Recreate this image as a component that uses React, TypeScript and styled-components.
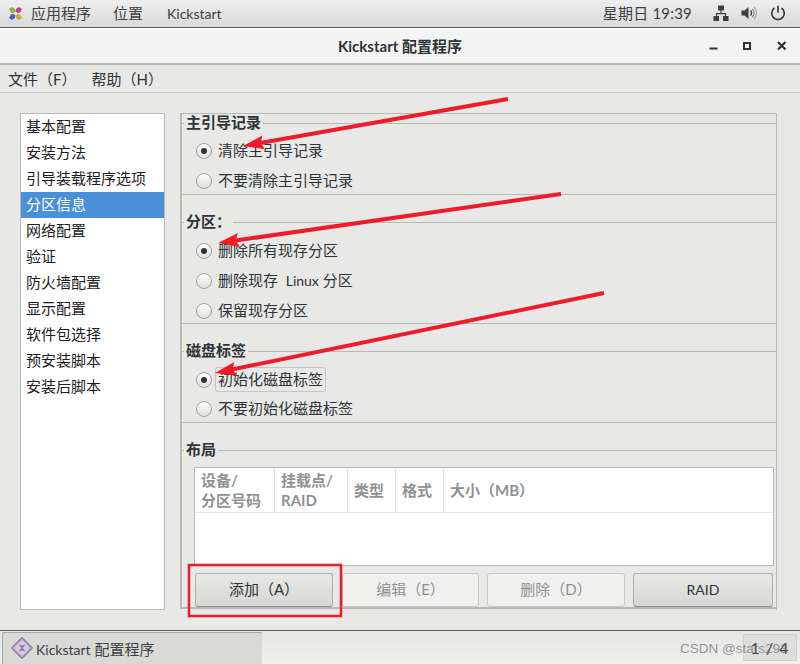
import React from "react";
import styled, { createGlobalStyle } from "styled-components";

const CJK = `Lato, "Noto Sans CJK SC", sans-serif`;

const Global = createGlobalStyle`
  html, body { margin: 0; padding: 0; background: #e8e8e7; }
  body { font-family: ${CJK}; font-size: 15px; color: #2e3436; }
  * { box-sizing: border-box; }
`;

const Screen = styled.div`
  position: relative;
  width: 800px;
  height: 664px;
  overflow: hidden;
  display: flex;
  flex-direction: column;
  background: #e8e8e7;
`;

const Latin = styled.span`
  font-size: 14px;
`;

const TopBar = styled.header`
  height: 28px;
  flex: none;
  display: flex;
  align-items: center;
  padding: 0 14px 1px 8px;
  color: #3c3f41;
  background: linear-gradient(#eeeeee, #d9d9d9);
  border-bottom: 1px solid #5d5d5c;
`;

const TopItem = styled.span<{ $gap: number }>`
  margin-left: ${(p) => p.$gap}px;
  margin-bottom: 1px;
  white-space: nowrap;
`;

const Spacer = styled.div`
  flex: 1;
`;

const Clock = styled.span`
  color: #3c3f41;
  margin: 0 21px 1px 0;
  letter-spacing: 0.2px;
  white-space: nowrap;
`;

const TrayIcon = styled.svg<{ $gap?: number }>`
  display: block;
  flex: none;
  margin-right: ${(p) => p.$gap ?? 0}px;
`;

const TitleBar = styled.div`
  height: 37px;
  flex: none;
  display: grid;
  grid-template-columns: 1fr auto 1fr;
  align-items: center;
  background: linear-gradient(#fafafa 0, #f4f4f4 10%, #f2f2f2 100%);
  border-bottom: 2px solid #b9b9b7;
`;

const TitleText = styled.div`
  grid-column: 2;
  font-weight: 700;
  color: #2e3436;
`;

const WinButtons = styled.div`
  grid-column: 3;
  justify-self: end;
  margin-right: 13px;
  display: flex;
  align-items: center;
  gap: 25px;
`;

const MenuBar = styled.nav`
  height: 28px;
  flex: none;
  display: flex;
  align-items: center;
  gap: 15px;
  padding: 0 0 0 8px;
  background: #e8e8e7;
  border-bottom: 1px solid #cfcfcd;
`;

const MenuItem = styled.span`
  color: #2e3436;
  white-space: nowrap;
`;

const Main = styled.main`
  flex: 1;
  display: flex;
  align-items: flex-start;
  padding: 20px 23px 0 20px;
  gap: 15px;
`;

const SideList = styled.ul`
  list-style: none;
  margin: 0;
  padding: 0;
  width: 145px;
  height: 497px;
  flex: none;
  background: #fff;
  border: 1px solid #b9b9b7;
`;

const SideRow = styled.li<{ $active?: boolean }>`
  height: 26px;
  line-height: 24px;
  padding-left: 5px;
  color: ${(p) => (p.$active ? "#fff" : "#1d1d1d")};
  background: ${(p) => (p.$active ? "#4a90d9" : "transparent")};
  white-space: nowrap;
`;

const Panel = styled.div`
  flex: 1;
  display: flex;
  flex-direction: column;
  border-top: 1px solid #b9b9b7;
  border-right: 1px solid #b9b9b7;
  height: 497px;
`;

const Frame = styled.section<{ $top: number; $bottom: number; $row: number; $thick?: boolean }>`
  padding: ${(p) => p.$top}px 0 ${(p) => p.$bottom}px 0;
  border-left: 2px solid #b9b9b7;
  border-bottom: ${(p) => (p.$thick ? 2 : 1)}px solid #b9b9b7;
  display: flex;
  flex-direction: column;
  row-gap: ${(p) => p.$row}px;
`;

const Legend = styled.h3`
  margin: 0;
  height: 20px;
  display: flex;
  align-items: flex-start;
  font-size: 15px;
  font-weight: 700;
  color: #2e3436;
  line-height: 17px;
  &::before {
    content: "";
    flex: none;
    width: 2px;
    height: 1px;
    margin: 9px 2px 0 0;
    background: #b9b9b7;
  }
  &::after {
    content: "";
    flex: 1;
    height: 1px;
    margin: 9px 0 0 2px;
    background: #b9b9b7;
  }
`;

const RadioGroup = styled.div<{ $gap: number }>`
  display: flex;
  flex-direction: column;
  gap: ${(p) => p.$gap}px;
  padding-left: 14px;
`;

const RadioRow = styled.label`
  height: 20px;
  display: flex;
  align-items: center;
  gap: 5px;
  color: #2e3436;
  white-space: nowrap;
`;

const RadioDot = styled.span<{ $on?: boolean }>`
  width: 16px;
  height: 16px;
  flex: none;
  border-radius: 50%;
  border: 1px solid #a0a09e;
  background: linear-gradient(#fcfcfc, #e0e0de);
  box-shadow: 0 1px 0 #fff inset;
  display: flex;
  align-items: center;
  justify-content: center;
  &::after {
    content: "";
    width: 6px;
    height: 6px;
    border-radius: 50%;
    background: ${(p) => (p.$on ? "#2e3436" : "transparent")};
  }
`;

const RadioText = styled.span<{ $focus?: boolean }>`
  padding: ${(p) => (p.$focus ? "1px 2px" : "0 1px")};
  margin-left: ${(p) => (p.$focus ? -1 : 0)}px;
  margin-bottom: 2px;
  line-height: 21px;
  box-shadow: ${(p) => (p.$focus ? "0 0 0 1px #c4c4c2" : "none")};
  border-radius: 2px;
`;

const LayoutBody = styled.div`
  padding: 6px 2px 0 12px;
  display: flex;
  flex-direction: column;
  gap: 7px;
`;

const Table = styled.div`
  height: 99px;
  background: #fff;
  border: 1px solid #b9b9b7;
`;

const THead = styled.div`
  height: 45px;
  display: grid;
  grid-template-columns: 80px 73px 48px 48px 1fr;
  border-bottom: 1px solid #e3e3e3;
`;

const TH = styled.div`
  border-right: 1px solid #e3e3e3;
  padding: 0 6px 1px;
  color: #8f9192;
  font-weight: 700;
  font-size: 15px;
  line-height: 20px;
  display: flex;
  align-items: center;
  white-space: pre-line;
  &:last-child { border-right: none; }
`;

const Buttons = styled.div`
  display: grid;
  grid-template-columns: 139px 137px 138px 140px;
  column-gap: 8px;
  margin-left: 1px;
`;

const Btn = styled.button<{ $off?: boolean }>`
  height: 34px;
  font-family: ${CJK};
  font-size: 15px;
  border-radius: 3px;
  border: 1px solid ${(p) => (p.$off ? "#c8c8c6" : "#b0b0ae")};
  border-bottom-color: ${(p) => (p.$off ? "#c8c8c6" : "#8f8f8d")};
  color: ${(p) => (p.$off ? "#8f9192" : "#2e3436")};
  background: ${(p) => (p.$off ? "#f0f0ef" : "linear-gradient(#e8e8e7, #d6d6d4)")};
  padding: 0 0 3px;
  &:first-child { margin-right: 1px; }
`;

const TaskBar = styled.footer`
  height: 34px;
  flex: none;
  display: flex;
  align-items: flex-end;
  padding: 0 3px 0 2px;
  border-top: 1px solid #5d5d5c;
  background: linear-gradient(#e6e6e5, #efefee);
`;

const TaskBtn = styled.div`
  width: 260px;
  height: 32px;
  display: flex;
  align-items: center;
  gap: 3px;
  padding: 0 0 1px 8px;
  background: #d9d9d8;
  border: 1px solid #a5a5a3;
  border-bottom: none;
  border-right: none;
  border-radius: 2px 2px 0 0;
  color: #3c3f41;
  white-space: pre;
`;

const Pager = styled.div`
  width: 54px;
  height: 27px;
  margin-bottom: 3px;
  display: flex;
  align-items: center;
  justify-content: center;
  color: #3c3f41;
  font-size: 16px;
  letter-spacing: 1px;
  background: #dededd;
  border: 1px solid #cfcfcd;
`;

const Watermark = styled.div`
  position: absolute;
  left: 680px;
  top: 641px;
  font-family: "Liberation Sans", Arial, sans-serif;
  font-size: 13.5px;
  color: rgba(110, 112, 112, 0.72);
  white-space: nowrap;
`;

const Overlay = styled.svg`
  position: absolute;
  inset: 0;
  pointer-events: none;
`;

function Arrow({ x1, y1, x2, y2 }: { x1: number; y1: number; x2: number; y2: number }) {
  const a = Math.atan2(y2 - y1, x2 - x1);
  const len = 21;
  const wing = 7;
  const ca = Math.cos(a);
  const sa = Math.sin(a);
  const bx = x2 - len * ca;
  const by = y2 - len * sa;
  const pts = `${x2},${y2} ${bx - sa * wing},${by + ca * wing} ${bx + 3 * ca},${by + 3 * sa} ${bx + sa * wing},${by - ca * wing}`;
  return (
    <g>
      <line x1={x1} y1={y1} x2={bx + 5 * ca} y2={by + 5 * sa} stroke="#ee1c2b" strokeWidth="4" />
      <polygon points={pts} fill="#ee1c2b" />
    </g>
  );
}

const Radio = ({ on, focus, children }: { on?: boolean; focus?: boolean; children: React.ReactNode }) => (
  <RadioRow>
    <RadioDot $on={on} />
    <RadioText $focus={focus}>{children}</RadioText>
  </RadioRow>
);

const side = ["基本配置", "安装方法", "引导装载程序选项", "分区信息", "网络配置", "验证", "防火墙配置", "显示配置", "软件包选择", "预安装脚本", "安装后脚本"];

export default function App() {
  return (
    <Screen>
      <Global />
      <TopBar>
        <TrayIcon width="15" height="15" viewBox="0 0 15 15">
          <polygon points="7.5,7.5 3,6.500 1,3 4,1 7,3" fill="#8fb04a" />
          <polygon points="7.5,7.5 8,3 11,1 14,3 12,6.500" fill="#b8468c" />
          <polygon points="7.5,7.5 12,8.500 14,12 11,14 8,12" fill="#d4a83a" />
          <polygon points="7.5,7.5 7,12 4,14 1,12 3,8.500" fill="#4f5fb0" />
          <rect x="6" y="6" width="3" height="3" fill="#e8e2c8" />
        </TrayIcon>
        <TopItem $gap={8}>应用程序</TopItem>
        <TopItem $gap={22}>位置</TopItem>
        <TopItem $gap={24}><Latin>Kickstart</Latin></TopItem>
        <Spacer />
        <Clock>星期日 19:39</Clock>
        <TrayIcon $gap={12} width="16" height="16" viewBox="0 0 16 16" fill="#3c3f41">
          <rect x="5" y="0.500" width="6" height="5" />
          <rect x="0.500" y="11" width="5.500" height="5" />
          <rect x="10" y="11" width="5.500" height="5" />
          <path d="M7.400 5h1.200v3H13v3h-1.200V9.200H4.200V11H3V8h4.400z" />
        </TrayIcon>
        <TrayIcon $gap={13} width="16" height="16" viewBox="0 0 16 16" fill="none">
          <path d="M0.500 5.500h3l4-3.500v12l-4-3.500h-3z" fill="#3c3f41" />
          <path d="M9.500 5.500a3.500 3.500 0 0 1 0 5" stroke="#3c3f41" strokeWidth="1.400" />
          <path d="M11.200 3.800a6 6 0 0 1 0 8.400" stroke="#8b8d8d" strokeWidth="1.200" />
          <path d="M13 2a8.500 8.500 0 0 1 0 12" stroke="#a9abab" strokeWidth="1.200" />
        </TrayIcon>
        <TrayIcon $gap={0} width="16" height="16" viewBox="0 0 16 16" fill="none" stroke="#3c3f41" strokeWidth="1.700">
          <path d="M8 0.800v7" />
          <path d="M4.500 3a6.300 6.300 0 1 0 7 0" />
        </TrayIcon>
      </TopBar>
      <TitleBar>
        <TitleText>Kickstart 配置程序</TitleText>
        <WinButtons>
          <TrayIcon width="9" height="9" viewBox="0 0 9 9"><rect x="0.500" y="6.500" width="8" height="2" fill="#2e3436" /></TrayIcon>
          <TrayIcon width="8" height="8" viewBox="0 0 8 8" fill="none"><rect x="1" y="1" width="6" height="6" stroke="#2e3436" strokeWidth="2" /></TrayIcon>
          <TrayIcon width="11" height="11" viewBox="0 0 11 11" stroke="#2e3436" strokeWidth="2.200"><path d="M2 2l7.500 7.500M9.500 2L2 9.500" /></TrayIcon>
        </WinButtons>
      </TitleBar>
      <MenuBar>
        <MenuItem>文件（F）</MenuItem>
        <MenuItem>帮助（H）</MenuItem>
      </MenuBar>
      <Main>
        <SideList>
          {side.map((s, i) => (
            <SideRow key={s} $active={i === 3}>{s}</SideRow>
          ))}
        </SideList>
        <Panel>
          <Frame $top={0} $bottom={3} $row={7}>
            <Legend>主引导记录</Legend>
            <RadioGroup $gap={10}>
              <Radio on>清除主引导记录</Radio>
              <Radio>不要清除主引导记录</Radio>
            </RadioGroup>
          </Frame>
          <Frame $top={18} $bottom={2} $row={8}>
            <Legend>分区：</Legend>
            <RadioGroup $gap={10}>
              <Radio on>删除所有现存分区</Radio>
              <Radio>删除现存&nbsp; <Latin>Linux</Latin> 分区</Radio>
              <Radio>保留现存分区</Radio>
            </RadioGroup>
          </Frame>
          <Frame $top={18} $bottom={3} $row={8}>
            <Legend>磁盘标签</Legend>
            <RadioGroup $gap={9}>
              <Radio on focus>初始化磁盘标签</Radio>
              <Radio>不要初始化磁盘标签</Radio>
            </RadioGroup>
          </Frame>
          <Frame $top={18} $bottom={0} $row={0} $thick>
            <Legend>布局</Legend>
            <LayoutBody>
              <Table>
                <THead>
                  <TH>{"设备/\n分区号码"}</TH>
                  <TH>{"挂载点/\nRAID"}</TH>
                  <TH>类型</TH>
                  <TH>格式</TH>
                  <TH>大小（MB）</TH>
                </THead>
              </Table>
              <Buttons>
                <Btn>添加（A）</Btn>
                <Btn $off>编辑（E）</Btn>
                <Btn $off>删除（D）</Btn>
                <Btn><Latin>RAID</Latin></Btn>
              </Buttons>
            </LayoutBody>
          </Frame>
        </Panel>
      </Main>
      <TaskBar>
        <TaskBtn>
          <TrayIcon width="22" height="22" viewBox="0 0 22 22">
            <polygon points="11,0.500 21.500,11 11,21.500 0.500,11" fill="#b9a3c9" stroke="#6b4f80" strokeWidth="1" />
            <polygon points="11,3 19,11 11,19 3,11" fill="#d6c8e0" />
            <path d="M7.500 7.500c2 1 5 1 7 0l-2.500 3.500 2.500 3.500c-2-1-5-1-7 0l2.500-3.500z" fill="#9a7fb0" />
          </TrayIcon>
          <span><Latin>Kickstart</Latin> 配置程序</span>
        </TaskBtn>
        <Spacer />
        <Pager>1 / 4</Pager>
      </TaskBar>
      <Watermark>CSDN @stars293</Watermark>
      <Overlay width="800" height="664" viewBox="0 0 800 664">
        <Arrow x1={508} y1={99} x2={243} y2={146} />
        <Arrow x1={561} y1={194} x2={218} y2={243} />
        <Arrow x1={604} y1={293} x2={215} y2={373} />
        <rect x="189" y="565" width="152" height="51" fill="none" stroke="#ee1c2b" strokeWidth="2.500" />
      </Overlay>
    </Screen>
  );
}
